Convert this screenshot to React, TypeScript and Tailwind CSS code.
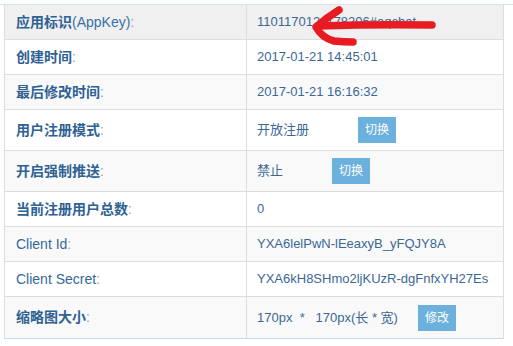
import type { ReactNode } from 'react'

type Row = {
  label: ReactNode
  value: ReactNode
  tall?: boolean
  bg: string
}

const cjk = "font-['Liberation_Sans','Noto_Sans_CJK_SC',sans-serif]"

function Colon() {
  return <span className="font-normal text-[#9aa5b1]">:</span>
}

function Btn({ children, className }: { children: ReactNode; className: string }) {
  return (
    <span className={`inline-flex items-center justify-center h-[26px] w-[38px] bg-[#6cb1de] text-white text-[12px] ${className}`}>
      {children}
    </span>
  )
}

const rows: Row[] = [
  {
    label: (
      <>
        <b>应用标识</b>
        <span className="text-[#3a70a6]">(AppKey)</span>
        <Colon />
      </>
    ),
    value: '1101170121178206#aqchat',
    bg: 'bg-[#f0f0f0]',
  },
  { label: <><b>创建时间</b><Colon /></>, value: '2017-01-21 14:45:01', bg: 'bg-white' },
  { label: <><b>最后修改时间</b><Colon /></>, value: '2017-01-21 16:16:32', bg: 'bg-[#f9f9f9]' },
  {
    label: <><b>用户注册模式</b><Colon /></>,
    value: (
      <>
        <span>开放注册</span>
        <Btn className="ml-[49px]">切换</Btn>
      </>
    ),
    tall: true,
    bg: 'bg-white',
  },
  {
    label: <><b>开启强制推送</b><Colon /></>,
    value: (
      <>
        <span>禁止</span>
        <Btn className="ml-[49px]">切换</Btn>
      </>
    ),
    tall: true,
    bg: 'bg-[#f9f9f9]',
  },
  { label: <><b>当前注册用户总数</b><Colon /></>, value: '0', bg: 'bg-white' },
  {
    label: <><span className="text-[#34689b]">Client Id</span><Colon /></>,
    value: 'YXA6lelPwN-lEeaxyB_yFQJY8A',
    bg: 'bg-[#f9f9f9]',
  },
  {
    label: <><span className="text-[#34689b]">Client Secret</span><Colon /></>,
    value: 'YXA6kH8SHmo2ljKUzR-dgFnfxYH27Es',
    bg: 'bg-white',
  },
  {
    label: <><b>缩略图大小</b><Colon /></>,
    value: (
      <>
        <span className="whitespace-pre">{'170px  *   170px(长 * 宽)'}</span>
        <Btn className="ml-[20px]">修改</Btn>
      </>
    ),
    tall: true,
    bg: 'bg-[#f9f9f9]',
  },
]

export default function App() {
  return (
    <div className={`relative w-[513px] h-[346px] bg-white overflow-hidden ${cjk}`}>
      <div className="h-[4px]" />
      <div className="border-t border-[#d6e4ee]">
        <div className="ml-[4px] w-[500px] border-x border-[#dddddd] border-b border-b-[#c9d9e6]">
          {rows.map((r, i) => (
            <div
              key={i}
              className={`grid grid-cols-[242px_1fr] ${r.bg} ${i < rows.length - 1 ? 'border-b border-[#dddddd]' : ''} ${r.tall ? 'h-[41px]' : 'h-[35px]'}`}
            >
              <div className="flex items-center pl-[11px] border-r border-[#dddddd] text-[14px] text-[#2f6193]">
                {r.label}
              </div>
              <div className="flex items-center pl-[10px] text-[13px] text-[#3a6896]">{r.value}</div>
            </div>
          ))}
        </div>
      </div>
      <svg className="absolute left-0 top-0 pointer-events-none" width="513" height="346" viewBox="0 0 513 346">
        <g fill="none" stroke="#e81a22" strokeWidth="7.5" strokeLinecap="round" strokeLinejoin="round">
          <path d="M318 26 Q375 24 432 25" />
          <path d="M339 10 Q326 18 316 27 Q322 38 334 41 Q344 42 353 42" />
        </g>
      </svg>
    </div>
  )
}
